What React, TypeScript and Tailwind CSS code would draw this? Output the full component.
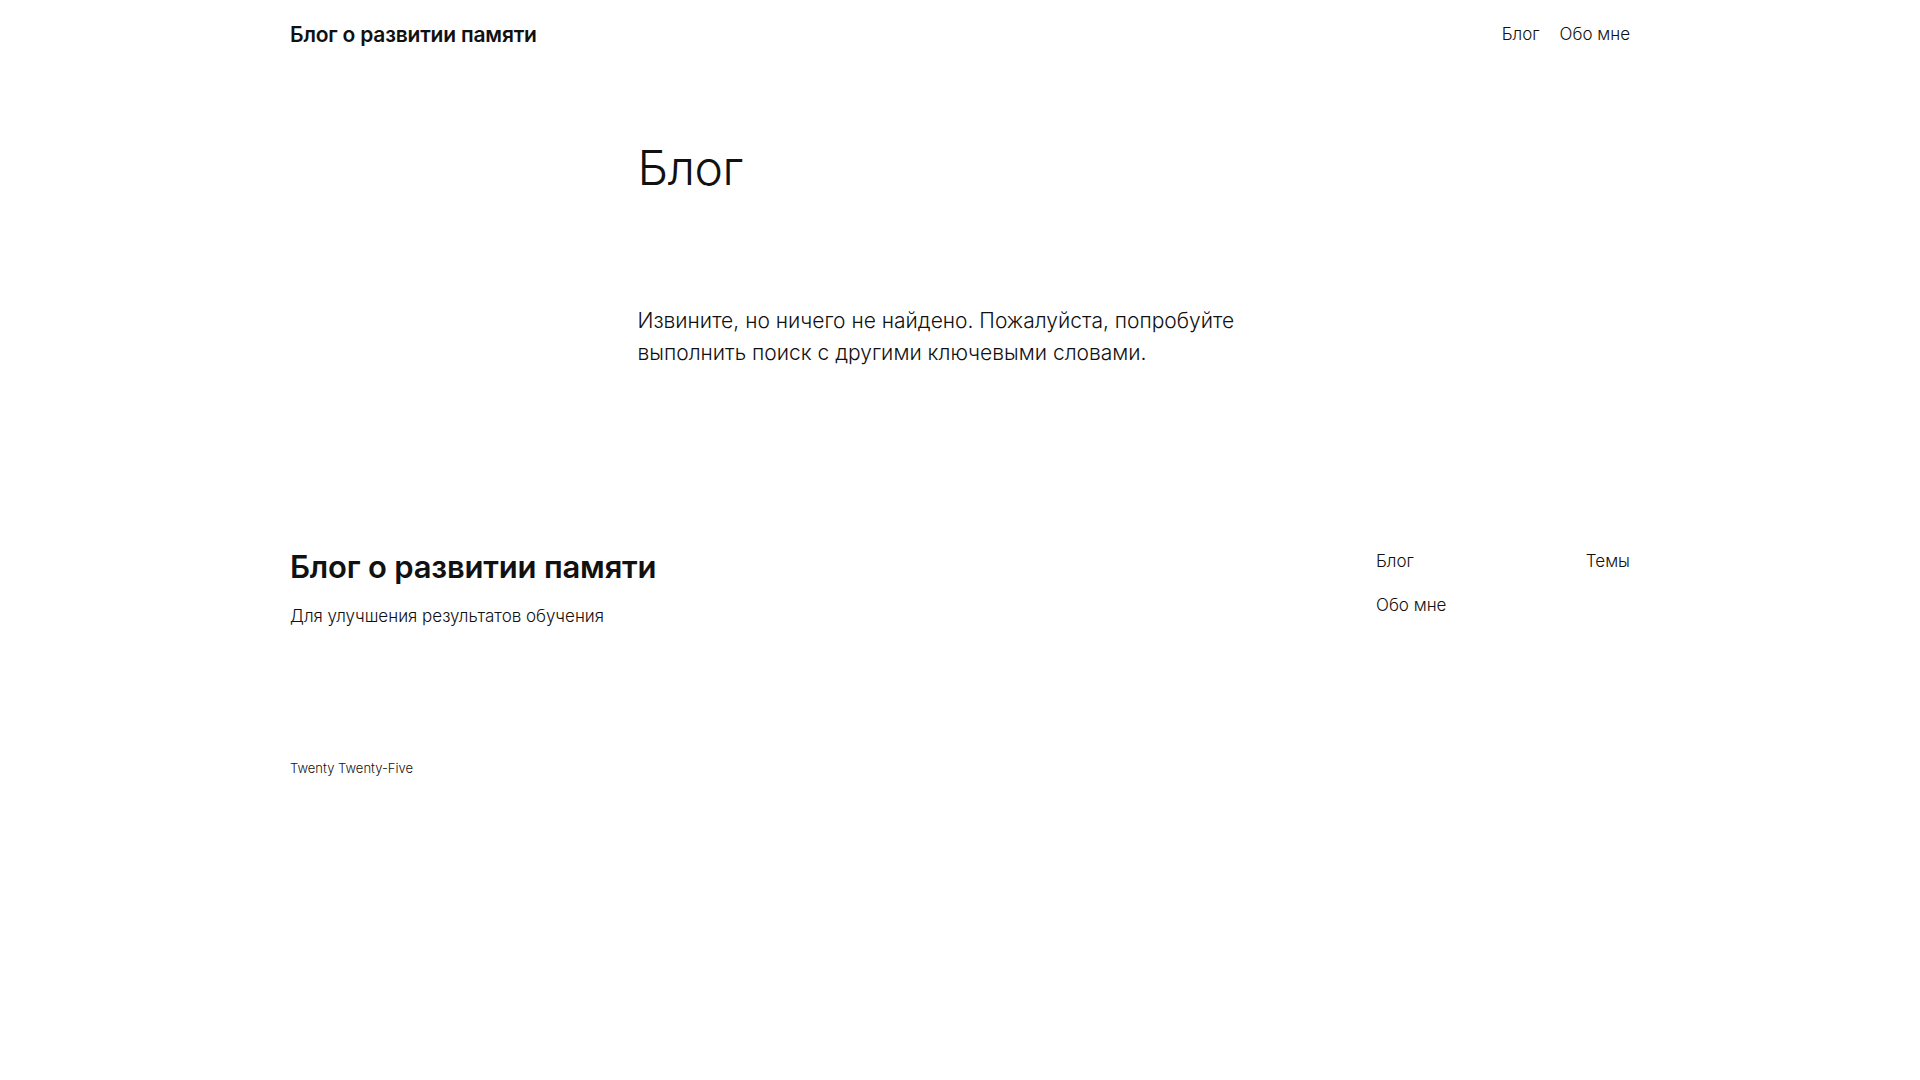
import React from 'react';

const font = { fontFamily: 'Inter, "Noto Sans", sans-serif' };

const App: React.FC = () => {
  return (
    <div className="min-h-screen bg-white text-[#111111]" style={font}>
      <header className="mx-auto flex h-[70px] max-w-[1340px] items-center justify-between">
        <a href="#" className="text-[21px] font-semibold tracking-[-0.2px]">
          Блог о развитии памяти
        </a>
        <nav className="flex items-center gap-[20px] text-[17px] font-light">
          <a href="#">Блог</a>
          <a href="#">Обо мне</a>
        </nav>
      </header>

      <main className="mx-auto mt-[67px] w-[645px]">
        <h1 className="text-[48px] font-light leading-[62px] tracking-[-0.5px]">Блог</h1>
        <p className="mt-[106px] text-[21px] font-light leading-[32px]">
          Извините, но ничего не найдено. Пожалуйста, попробуйте выполнить поиск с другими ключевыми словами.
        </p>
      </main>

      <footer className="mx-auto mt-[180px] max-w-[1340px]">
        <div className="flex items-start justify-between">
          <div>
            <h2 className="text-[31px] font-semibold leading-[36px] tracking-[-0.2px]">
              Блог о развитии памяти
            </h2>
            <p className="mt-[19px] text-[17px] font-light leading-[25px]">
              Для улучшения результатов обучения
            </p>
          </div>
          <div className="flex w-[254px] justify-between text-[17px] font-light leading-[25px]">
            <div className="flex flex-col gap-[19px]">
              <a href="#">Блог</a>
              <a href="#">Обо мне</a>
            </div>
            <div>
              <a href="#">Темы</a>
            </div>
          </div>
        </div>
        <p className="mt-[129px] text-[13px] font-light leading-[20px]">Twenty Twenty-Five</p>
      </footer>
    </div>
  );
};

export default App;
